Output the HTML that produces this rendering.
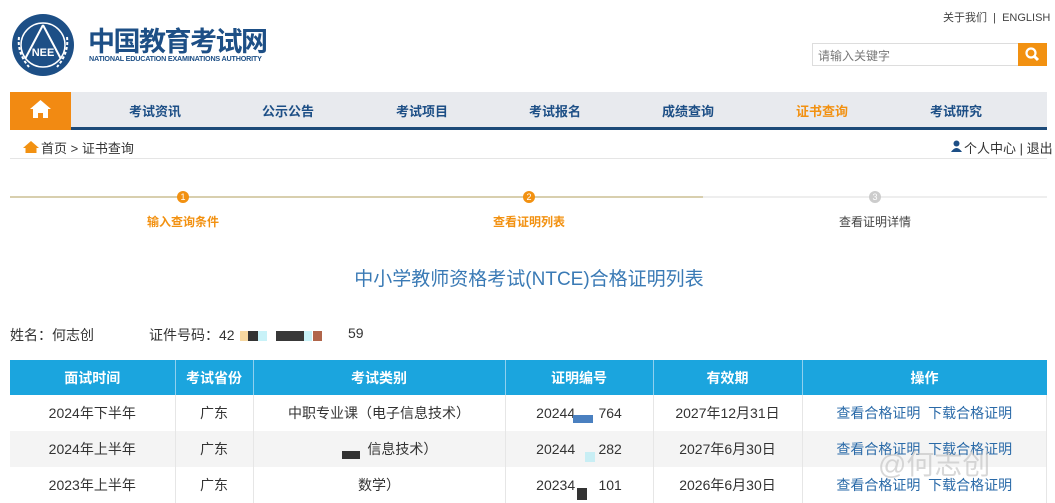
<!DOCTYPE html>
<html><head><meta charset="utf-8"><style>
*{margin:0;padding:0;box-sizing:border-box}
body{width:1055px;height:500px;overflow:hidden;background:#fff;font-family:"Liberation Sans","Noto Sans CJK SC",sans-serif;position:relative;color:#333}
.a{position:absolute}
.nav{left:10px;top:92px;width:1037px;height:38px;background:#e8eaee;border-bottom:3px solid #1d4a78}
.nav span{position:absolute;top:9px;font-size:13px;font-weight:bold;color:#1d4f86;transform:translateX(-50%)}
table{position:absolute;left:10px;top:360px;width:1037px;border-collapse:collapse;font-size:14px}
th{background:#1ba5de;color:#fff;height:35px;font-size:14px;border-right:1px solid #8fd0ee}
td{height:36px;text-align:center;border-right:1px solid #e6e6e6;color:#333}
tr:nth-child(3) td{background:#f4f4f4}
td a{color:#2a6aa8;text-decoration:none}
.blk{position:absolute;display:block}
</style></head><body>
<svg class="a" style="left:11px;top:13px" width="64" height="64" viewBox="0 0 64 64">
<circle cx="32" cy="32" r="31" fill="#1d4f86"/>
<circle cx="32" cy="32" r="22" fill="none" stroke="#fff" stroke-width="1.5"/>
<path d="M32 12 L14 46 M32 12 L50 46" stroke="#fff" stroke-width="2" fill="none"/>
<text x="32" y="43" font-size="11" font-weight="bold" fill="#fff" text-anchor="middle" font-family="Liberation Sans">NEE</text>
<path d="M8 24 Q6 40 18 54 M56 24 Q58 40 46 54" stroke="#fff" stroke-width="2" stroke-dasharray="3 2" fill="none"/>
</svg>
<div class="a" style="left:88px;top:20px;font-size:27px;font-weight:bold;color:#1d4f86;letter-spacing:-1.5px">中国教育考试网</div>
<div class="a" style="left:89px;top:54px;font-size:7.2px;font-weight:bold;color:#1d4f86;letter-spacing:-0.2px">NATIONAL EDUCATION EXAMINATIONS AUTHORITY</div>
<div class="a" style="left:943px;top:9px;font-size:11px;color:#444">关于我们 &nbsp;|&nbsp; ENGLISH</div>
<div class="a" style="left:812px;top:43px;width:207px;height:23px;border:1px solid #ddd;font-size:12px;color:#777;padding:3px 5px">请输入关键字</div>
<div class="a" style="left:1018px;top:43px;width:29px;height:23px;background:#f29111">
<svg width="29" height="23"><circle cx="13" cy="10" r="4.5" stroke="#fff" stroke-width="2.2" fill="none"/><path d="M16 13 L20 17" stroke="#fff" stroke-width="3"/></svg></div>
<div class="a nav">
<div class="a" style="left:0;top:0;width:61px;height:38px;background:#f28a12">
<svg width="61" height="38"><path d="M30.5 8 L20 17 H23 V26 H28 V21 H33 V26 H38 V17 H41 Z" fill="#fff"/></svg></div>
<span style="left:145px">考试资讯</span><span style="left:278px">公示公告</span><span style="left:412px">考试项目</span><span style="left:545px">考试报名</span><span style="left:678px">成绩查询</span><span style="left:812px;color:#f29111">证书查询</span><span style="left:946px">考试研究</span>
</div>
<svg class="a" style="left:23px;top:140px" width="16" height="14"><path d="M8 1 L0 8 H2.5 V13 H13.5 V8 H16 Z" fill="#f29111"/></svg>
<div class="a" style="left:41px;top:138px;font-size:13px;color:#333">首页 &gt; 证书查询</div>
<svg class="a" style="left:951px;top:140px" width="11" height="12"><circle cx="5.5" cy="3.5" r="3" fill="#1d4f86"/><path d="M0 12 Q5.5 4 11 12Z" fill="#1d4f86"/></svg>
<div class="a" style="left:964px;top:138px;font-size:13px;color:#333">个人中心 | 退出</div>
<div class="a" style="left:10px;top:158px;width:1037px;height:1px;background:#e5e5e5"></div>
<div class="a" style="left:10px;top:196px;width:693px;height:2px;background:#d8cfae"></div>
<div class="a" style="left:703px;top:196px;width:344px;height:2px;background:#eee"></div>
<div class="a" style="left:177px;top:191px;width:12px;height:12px;border-radius:6px;background:#f29111;color:#fff;font-size:9px;text-align:center;line-height:12px">1</div>
<div class="a" style="left:523px;top:191px;width:12px;height:12px;border-radius:6px;background:#f29111;color:#fff;font-size:9px;text-align:center;line-height:12px">2</div>
<div class="a" style="left:869px;top:191px;width:12px;height:12px;border-radius:6px;background:#ccc;color:#fff;font-size:9px;text-align:center;line-height:12px">3</div>
<div class="a" style="left:133px;top:213px;width:100px;text-align:center;font-size:12px;font-weight:bold;color:#f29111">输入查询条件</div>
<div class="a" style="left:479px;top:213px;width:100px;text-align:center;font-size:12px;font-weight:bold;color:#f29111">查看证明列表</div>
<div class="a" style="left:825px;top:213px;width:100px;text-align:center;font-size:12px;color:#444">查看证明详情</div>
<div class="a" style="left:229px;top:264px;width:600px;text-align:center;font-size:19px;color:#3a7ab5">中小学教师资格考试(NTCE)合格证明列表</div>
<div class="a" style="left:10px;top:325px;font-size:14px;color:#333">姓名：何志创</div>
<div class="a" style="left:149px;top:325px;font-size:14px;color:#333">证件号码：42</div>
<span class="blk" style="left:240px;top:331px;width:8px;height:10px;background:#f6d7a0"></span>
<span class="blk" style="left:248px;top:331px;width:10px;height:10px;background:#333"></span>
<span class="blk" style="left:258px;top:331px;width:9px;height:10px;background:#c8f2f8"></span>
<span class="blk" style="left:276px;top:331px;width:28px;height:10px;background:#383838"></span>
<span class="blk" style="left:304px;top:331px;width:8px;height:10px;background:#c8f2f8"></span>
<span class="blk" style="left:313px;top:331px;width:9px;height:10px;background:#b0654a"></span>
<div class="a" style="left:348px;top:325px;font-size:14px;color:#333">59</div>
<table>
<tr><th style="width:165px">面试时间</th><th style="width:78px">考试省份</th><th style="width:252px">考试类别</th><th style="width:148px">证明编号</th><th style="width:149px">有效期</th><th style="border-right:0">操作</th></tr>
<tr><td>2024年下半年</td><td>广东</td><td>中职专业课（电子信息技术）</td><td>20244&nbsp;&nbsp;&nbsp;&nbsp;&nbsp;&nbsp;764</td><td>2027年12月31日</td><td><a>查看合格证明</a>&nbsp;&nbsp;<a>下载合格证明</a></td></tr>
<tr><td>2024年上半年</td><td>广东</td><td>&nbsp;&nbsp;&nbsp;&nbsp;&nbsp;&nbsp;&nbsp;&nbsp;&nbsp;&nbsp;&nbsp;&nbsp;信息技术）</td><td>20244&nbsp;&nbsp;&nbsp;&nbsp;&nbsp;&nbsp;282</td><td>2027年6月30日</td><td><a>查看合格证明</a>&nbsp;&nbsp;<a>下载合格证明</a></td></tr>
<tr><td>2023年上半年</td><td>广东</td><td>数学）</td><td>20234&nbsp;&nbsp;&nbsp;&nbsp;&nbsp;&nbsp;101</td><td>2026年6月30日</td><td><a>查看合格证明</a>&nbsp;&nbsp;<a>下载合格证明</a></td></tr>
</table>
<span class="blk" style="left:342px;top:451px;width:18px;height:8px;background:#333"></span>
<span class="blk" style="left:573px;top:415px;width:20px;height:8px;background:#4a80c0"></span>
<span class="blk" style="left:585px;top:452px;width:10px;height:10px;background:#c8eef4"></span>
<span class="blk" style="left:577px;top:488px;width:10px;height:12px;background:#333"></span>
<div class="a" style="left:878px;top:443px;font-size:28px;color:rgba(190,190,190,0.6)">@何志创</div>
</body></html>
